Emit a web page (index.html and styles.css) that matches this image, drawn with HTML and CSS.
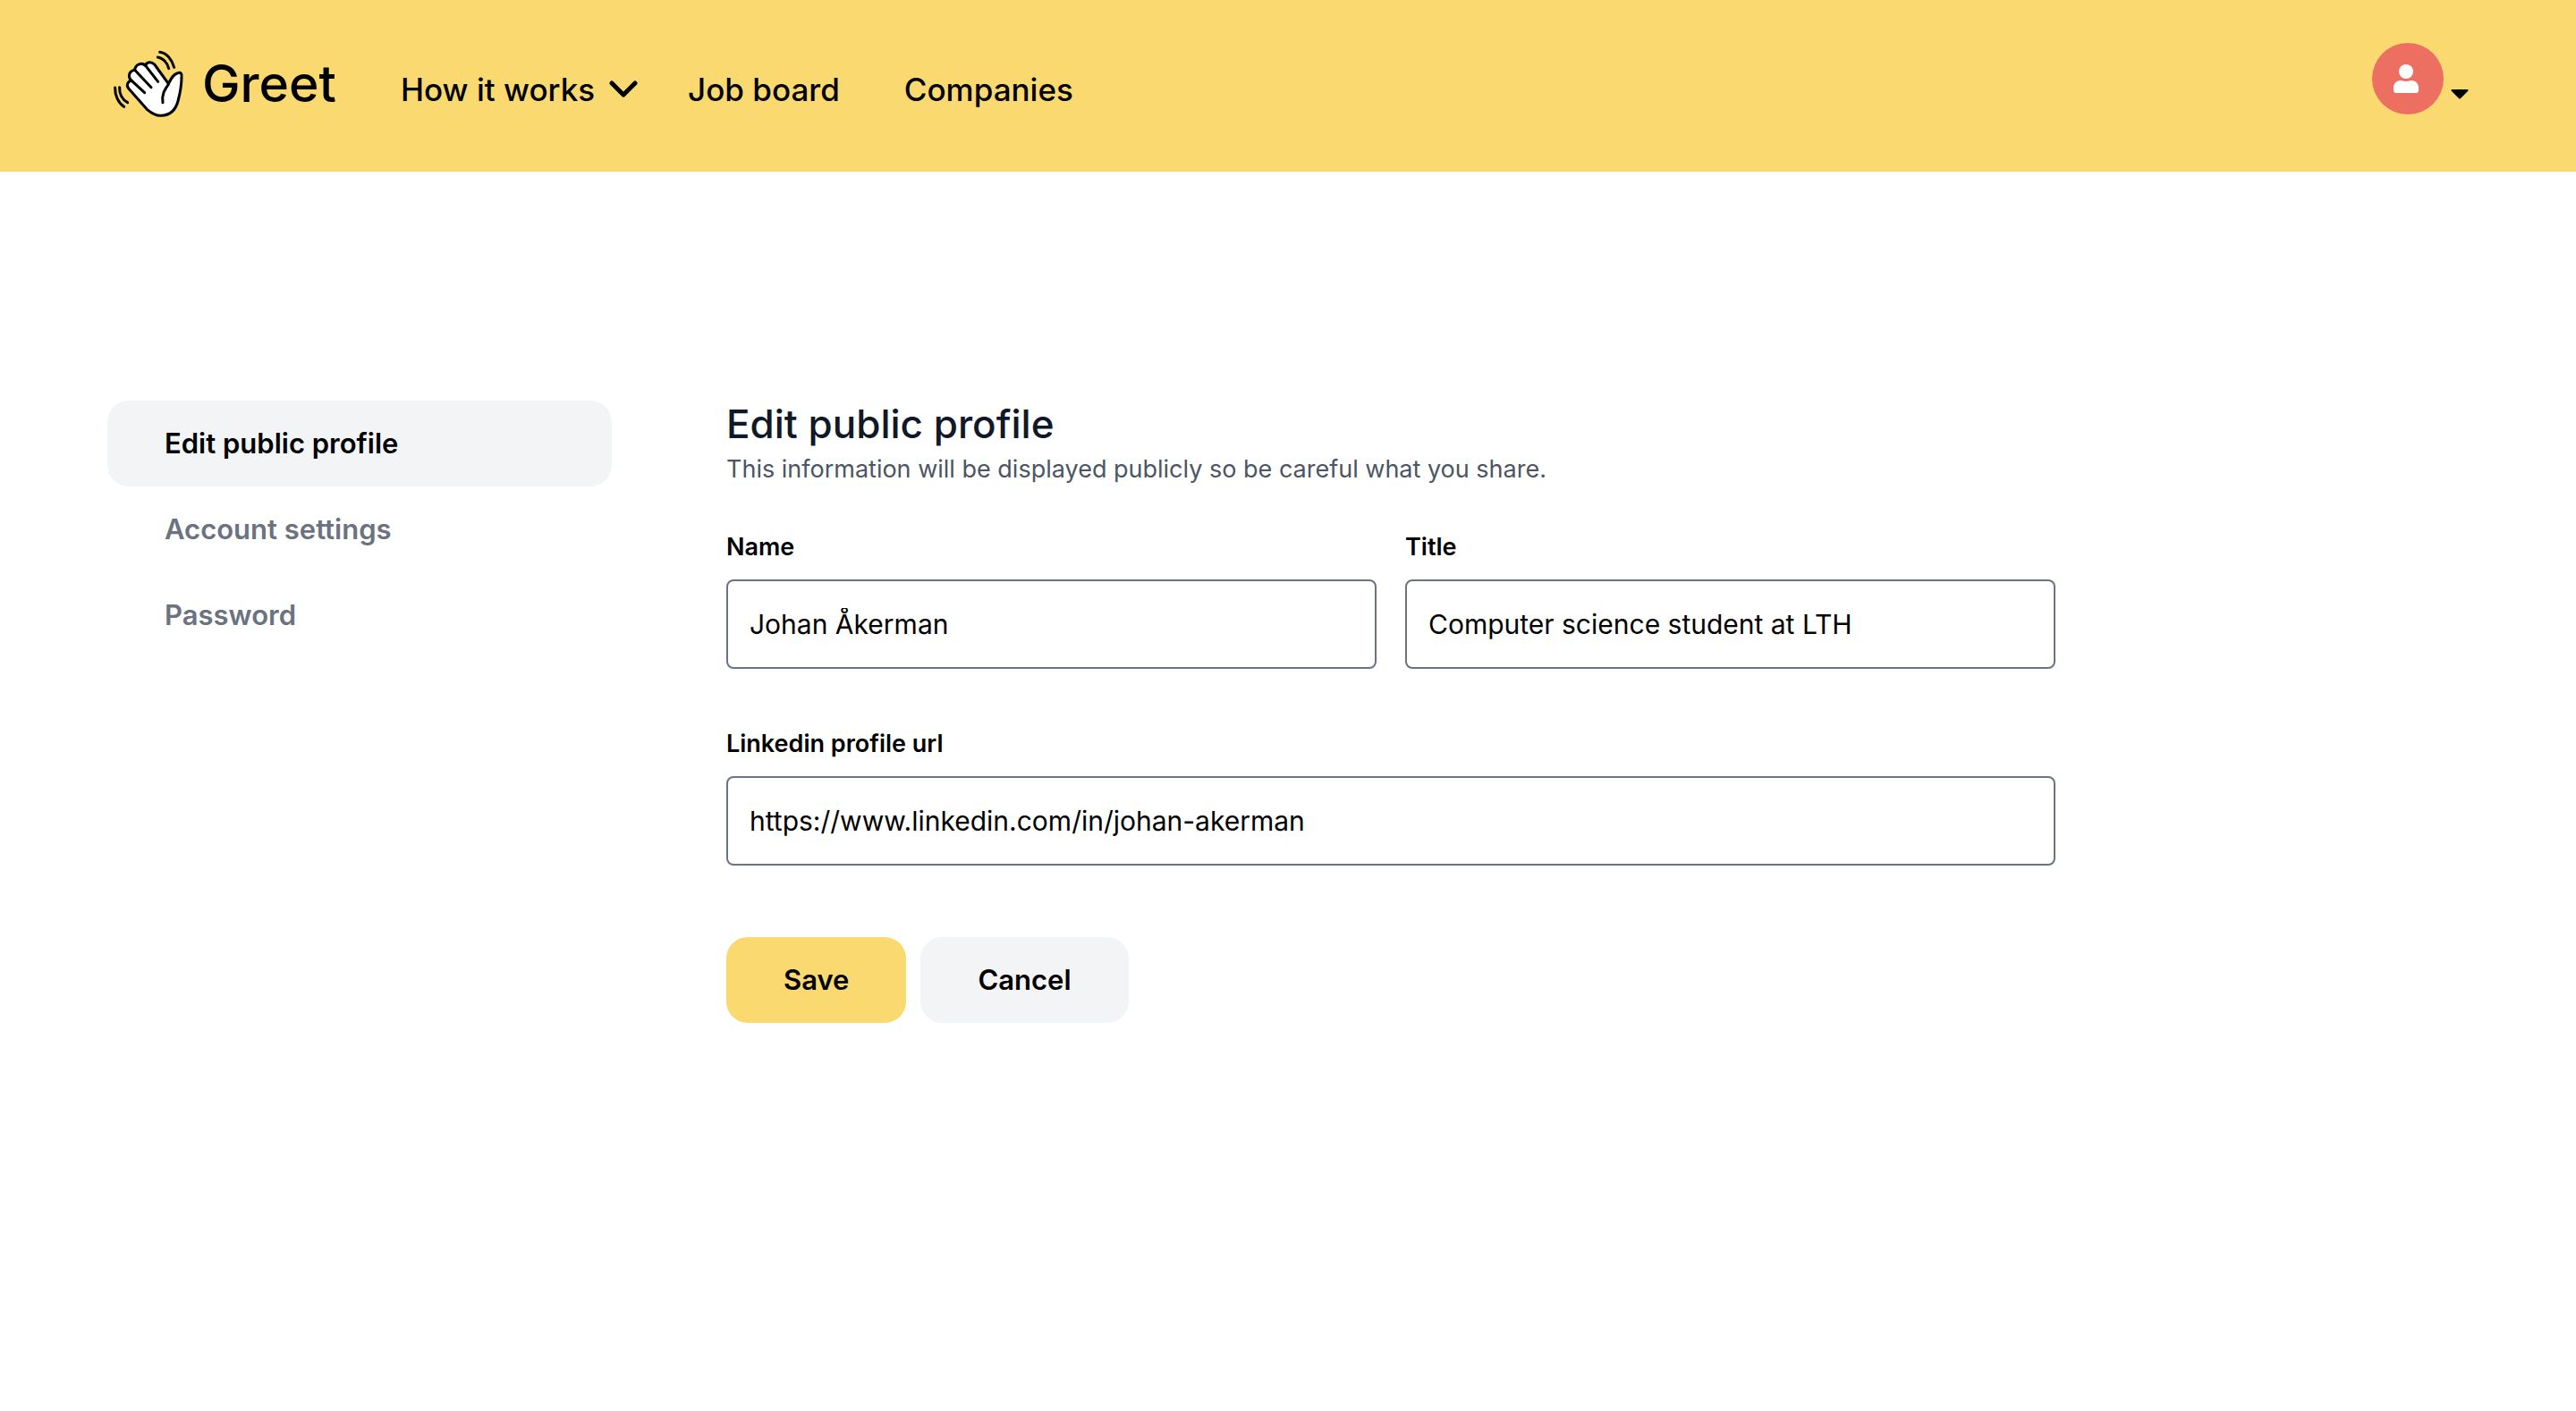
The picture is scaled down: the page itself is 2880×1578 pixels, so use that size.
FILE: index.html
```html
<!DOCTYPE html>
<html lang="en">
<head>
  <meta charset="utf-8">
  <meta name="viewport" content="width=device-width, initial-scale=1">
  <title>Greet – Edit public profile</title>
  <link rel="stylesheet" href="styles.css">
</head>
<body>
  <header class="site-header">
    <a class="brand" href="#">
      <svg class="brand-icon" viewBox="0 0 240 228" aria-hidden="true">
        <g fill="none" stroke="#000" stroke-width="9" stroke-linecap="round" stroke-linejoin="round">
          <path fill="#fff" d="M115 199L54 130C44 118 50 104 64 103C52 94 50 72 74 67C76 48 98 40 110 52C114 38 130 38 140 48L187 113C195 98 203 80 218 77C228 74 233 79 231 90C231 120 226 145 219 171C211 202 194 219 161 220C145 220 128 210 115 199Z"/>
          <path d="M187 115C174 134 164 148 168 176"/>
          <path d="M64 103L107 143M74 67L129 125M110 52L152 106"/>
          <path d="M158 7C182 10 199 32 206 58M151 24C168 26 183 42 188 62"/>
          <path d="M8 126C7 152 19 177 38 190M23 125C22 147 32 166 50 176"/>
        </g>
      </svg>
      <span class="brand-name">Greet</span>
    </a>
    <nav class="main-nav" aria-label="Main">
      <a class="nav-link" href="#">How it works
        <svg class="chevron" viewBox="0 0 32 20" aria-hidden="true"><path d="M3 3L16 16L29 3" fill="none" stroke="currentColor" stroke-width="5" stroke-linecap="round" stroke-linejoin="round"/></svg>
      </a>
      <a class="nav-link" href="#">Job board</a>
      <a class="nav-link" href="#">Companies</a>
    </nav>
    <button class="account" type="button" aria-label="Account menu">
      <span class="avatar">
        <svg class="avatar-icon" viewBox="0 0 28 32" aria-hidden="true"><circle cx="14" cy="8" r="8"/><path d="M8 18c2 0 3 1 6 1s4-1 6-1c5 0 8 4 8 8v3c0 2-1 3-3 3H3c-2 0-3-1-3-3v-3c0-4 3-8 8-8z"/></svg>
      </span>
      <svg class="caret" viewBox="0 0 20 12" aria-hidden="true"><path d="M2 0H18C20 0 20 1 19 2L11 10Q10 11 9 10L1 2C0 1 0 0 2 0Z"/></svg>
    </button>
  </header>

  <div class="page">
    <nav class="sidebar" aria-label="Settings">
      <a class="side-link is-active" href="#" aria-current="page">Edit public profile</a>
      <a class="side-link" href="#">Account settings</a>
      <a class="side-link" href="#">Password</a>
    </nav>
    <main class="content">
      <h1 class="title">Edit public profile</h1>
      <p class="subtitle">This information will be displayed publicly so be careful what you share.</p>
      <form class="form">
        <div class="field">
          <label class="label" for="name">Name</label>
          <input class="input" id="name" type="text" value="Johan Åkerman">
        </div>
        <div class="field">
          <label class="label" for="title">Title</label>
          <input class="input" id="title" type="text" value="Computer science student at LTH">
        </div>
        <div class="field field-wide">
          <label class="label" for="linkedin">Linkedin profile url</label>
          <input class="input" id="linkedin" type="text" value="https://www.linkedin.com/in/johan-akerman">
        </div>
        <div class="actions">
          <button class="button button-primary" type="submit">Save</button>
          <button class="button" type="button">Cancel</button>
        </div>
      </form>
    </main>
  </div>
</body>
</html>
```

FILE: styles.css
```css
* {
  box-sizing: border-box;
}

body {
  margin: 0;
  background: #fff;
  color: #000;
  font-family: Inter, "Liberation Sans", sans-serif;
  font-size: 31px;
  line-height: 48px;
}

a {
  color: inherit;
  text-decoration: none;
}

button,
input {
  font: inherit;
  color: inherit;
}

.site-header {
  display: flex;
  align-items: flex-start;
  padding: 48px 120px;
  background: #fad971;
}

.brand {
  display: flex;
  align-items: center;
  gap: 20px;
  padding-left: 6px;
}

.brand-icon {
  width: 80px;
  height: 76px;
}

.brand-name {
  font-size: 57px;
  font-weight: 500;
  line-height: 92px;
}

.main-nav {
  display: flex;
  gap: 72px;
  margin-left: 72px;
  padding-top: 24px;
}

.nav-link {
  display: flex;
  align-items: center;
  gap: 16px;
  font-size: 35px;
  font-weight: 500;
  line-height: 56px;
}

.chevron {
  width: 32px;
  height: 20px;
}

.nav-link:first-child {
  margin-right: -16px;
}

.account {
  display: flex;
  align-items: center;
  gap: 8px;
  margin-left: auto;
  padding: 0 0 16px;
  border: 0;
  background: none;
}

.avatar {
  display: flex;
  align-items: center;
  justify-content: center;
  width: 80px;
  height: 80px;
  border-radius: 50%;
  background: #ed6f61;
}

.avatar-icon {
  width: 28px;
  height: 32px;
  margin-right: 4px;
  fill: #fff;
}

.caret {
  width: 20px;
  height: 12px;
  margin-top: 36px;
}

.page {
  display: grid;
  grid-template-columns: 564fr 1486fr 334fr;
  column-gap: 128px;
  padding: 256px 120px 120px;
}

.side-link {
  display: block;
  padding: 24px 64px;
  border-radius: 24px;
  color: #6b7280;
  font-weight: 600;
}

.side-link.is-active {
  background: #f3f4f6;
  color: #000;
}

.title {
  margin: 0;
  color: #111827;
  font-size: 44px;
  font-weight: 500;
  line-height: 52px;
}

.subtitle {
  margin: 4px 0 0;
  color: #4b5563;
  font-size: 27px;
  line-height: 42px;
}

.form {
  display: grid;
  grid-template-columns: 1fr 1fr;
  gap: 64px 32px;
  margin-top: 46px;
}

.field-wide,
.actions {
  grid-column: 1 / -1;
}

.label {
  display: block;
  margin-bottom: 16px;
  font-size: 27px;
  font-weight: 600;
  line-height: 40px;
}

.input {
  display: block;
  width: 100%;
  height: 100px;
  padding: 0 24px;
  border: 2px solid #6b7280;
  border-radius: 8px;
  background: #fff;
  font-size: 30px;
}

.actions {
  display: flex;
  gap: 16px;
  margin-top: 16px;
}

.button {
  padding: 24px 64px;
  border: 0;
  border-radius: 24px;
  background: #f3f4f6;
  font-weight: 600;
}

.button-primary {
  background: #fad971;
}
```
